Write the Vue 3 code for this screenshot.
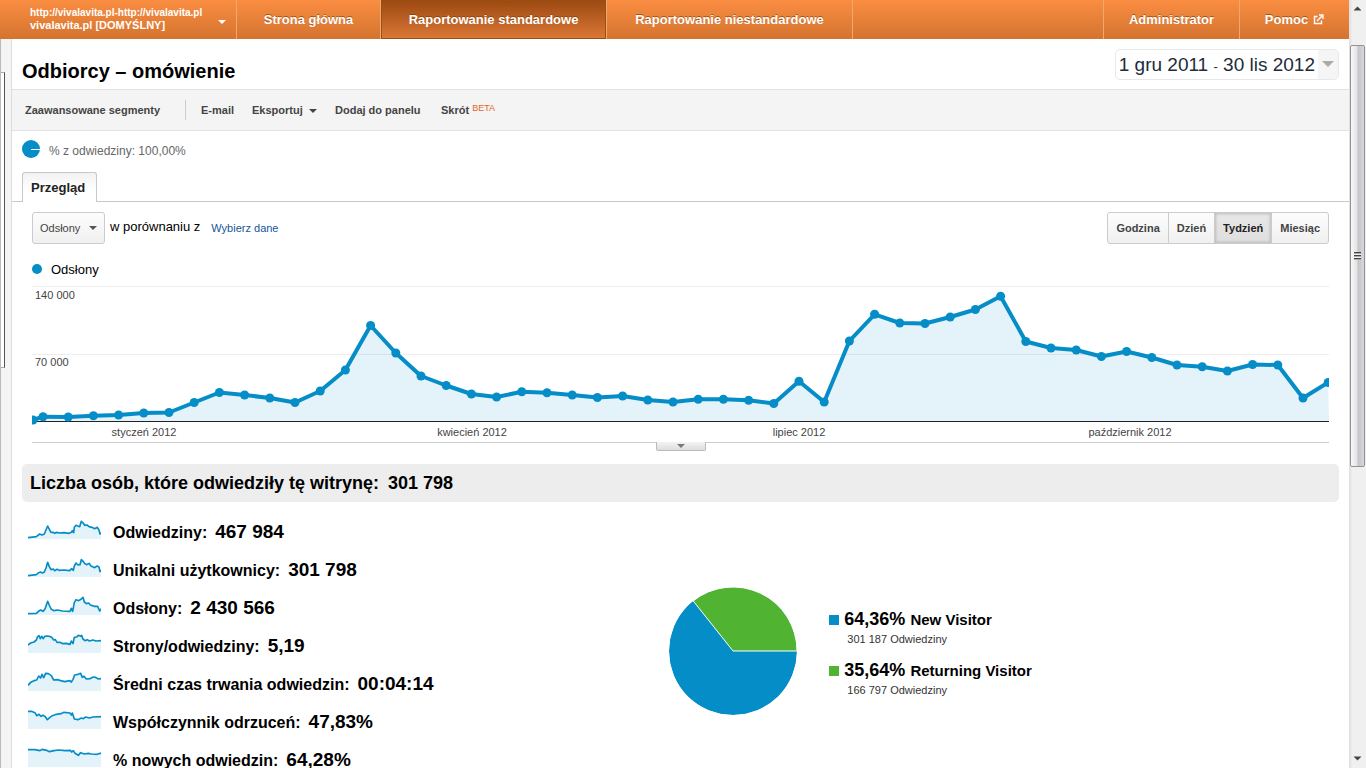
<script setup>
import { ref } from 'vue'

const metric = ref('Odsłony')
const period = ref('Tydzień')
const periods = ['Godzina', 'Dzień', 'Tydzień', 'Miesiąc']

const weekly = [
  136.7, 137, 135.7, 135, 133, 132.5, 122.5, 112.5, 115, 118, 122.5, 111, 90, 45.5, 73, 96, 105.5,
  114, 117, 111.7, 112.7, 115, 117.5, 116, 120, 122, 119.3, 119.3, 120.3, 123.5, 101.3, 122, 61,
  34.3, 43, 43.5, 37, 29.5, 16.3, 61.5, 68, 70, 76.5, 71.5, 77.5, 85, 86.8, 91, 84.5, 85, 118, 102.5
]
const points = [[1, 140], ...weekly.map((y, i) => [Math.round((11 + i * 25.2) * 10) / 10, y])]
const line = points.map((p) => p.join(',')).join(' ')
const area = `1,141 ${line} 1297,141`

const months = [
  { x: 112, label: 'styczeń 2012' },
  { x: 440, label: 'kwiecień 2012' },
  { x: 767, label: 'lipiec 2012' },
  { x: 1098, label: 'październik 2012' }
]

const stats = [
  {
    label: 'Odwiedziny:', value: '467 984',
    spark: '0,53 25,50 35,42 42,45 49,42 54,30 59,18 65,30 69,37 76,37 80,40 86,37 94,39 108,38 123,40 130,37 133,32 137,38 139,22 144,16 149,18 155,20 160,4 166,10 170,16 177,15 183,20 192,22 200,26 208,22 213,30 216,42 219,37'
  },
  {
    label: 'Unikalni użytkownicy:', value: '301 798',
    spark: '0,53 25,50 32,44 37,42 43,45 49,42 54,30 59,13 64,26 69,35 76,33 80,38 87,34 94,37 108,36 125,38 131,32 136,37 139,24 144,15 150,21 156,20 160,5 166,11 171,17 177,20 183,16 189,24 200,29 207,24 213,27 216,41 219,36'
  },
  {
    label: 'Odsłony:', value: '2 430 566',
    spark: '0,53 25,52 33,45 38,42 45,46 51,39 59,16 65,30 70,40 78,44 88,42 104,45 126,46 130,37 134,46 139,20 144,11 152,14 160,9 165,4 169,18 175,23 182,21 187,27 200,31 209,31 215,45 219,38'
  },
  {
    label: 'Strony/odwiedziny:', value: '5,19',
    spark: '0,33 8,27 18,24 25,18 29,8 33,5 37,14 41,7 46,14 50,7 57,6 64,7 71,10 77,18 82,17 87,25 96,25 104,29 115,28 126,31 130,21 135,29 139,10 146,9 151,4 158,7 161,4 165,15 171,20 178,17 184,21 195,18 204,21 219,20'
  },
  {
    label: 'Średni czas trwania odwiedzin:', value: '00:04:14',
    spark: '0,40 8,31 18,26 26,24 32,12 38,18 42,7 47,17 53,4 61,5 70,11 77,24 88,23 98,26 110,29 125,26 130,30 135,22 140,9 150,7 158,4 163,16 168,13 175,21 187,20 195,15 203,16 211,21 219,20'
  },
  {
    label: 'Współczynnik odrzuceń:', value: '47,83%',
    spark: '0,4 10,4 21,8 26,17 33,13 39,19 45,16 52,20 58,29 66,22 73,17 85,13 99,11 108,7 126,9 130,15 133,9 139,27 150,29 160,24 166,26 173,21 184,24 195,21 219,20'
  },
  {
    label: '% nowych odwiedzin:', value: '64,28%',
    spark: '0,5 20,5 36,8 42,4 56,7 64,11 78,8 91,6 112,8 127,7 131,12 136,8 141,16 151,22 158,14 169,18 181,16 190,18 207,19 219,15'
  }
]

const visitors = [
  { share: '64,36%', name: 'New Visitor', visits: '301 187 Odwiedziny', kind: 'fresh' },
  { share: '35,64%', name: 'Returning Visitor', visits: '166 797 Odwiedziny', kind: 'returning' }
]
</script>

<template>
  <div class="window">
    <div class="page">
      <header class="topbar">
        <button class="account" type="button">
          <span class="account-names">
            <small>http://vivalavita.pl-http://vivalavita.pl</small>
            <span>vivalavita.pl [DOMYŚLNY]</span>
          </span>
          <i class="caret"></i>
        </button>
        <nav class="nav">
          <a href="#" class="home">Strona główna</a>
          <a href="#" class="standard active">Raportowanie standardowe</a>
          <a href="#" class="custom">Raportowanie niestandardowe</a>
        </nav>
        <nav class="nav side">
          <a href="#" class="admin">Administrator</a>
          <a href="#" class="help">Pomoc
            <svg width="11" height="11" viewBox="0 0 11 11" aria-hidden="true">
              <path d="M4.5 2.5H1.5V9.5H8.5V6.5M4 7L9 2M6 1H10V5" fill="none" stroke="#fff" stroke-width="1.4" />
            </svg>
          </a>
        </nav>
      </header>

      <div class="body">
        <aside class="gutter"><button class="gutter-handle" type="button" aria-label="Menu"></button></aside>
        <main class="report">
          <div class="heading">
            <h1>Odbiorcy – omówienie</h1>
            <button class="dates" type="button">
              <span class="range">1 gru 2011 <small>-</small> 30 lis 2012</span>
              <span class="dates-arrow"><i class="caret"></i></span>
            </button>
          </div>

          <div class="toolbar">
            <button type="button" class="segments">Zaawansowane segmenty</button>
            <span class="divider"></span>
            <button type="button" class="email">E-mail</button>
            <button type="button" class="export">Eksportuj <i class="caret"></i></button>
            <button type="button" class="dashboard">Dodaj do panelu</button>
            <button type="button">Skrót <sup>BETA</sup></button>
          </div>

          <div class="share">
            <svg width="18" height="18" viewBox="0 0 18 18" aria-hidden="true">
              <circle cx="9" cy="9" r="9" fill="#058dc7" />
              <path d="M9 9.5H18" stroke="#fff" />
            </svg>
            <span>% z odwiedziny: 100,00%</span>
          </div>

          <div class="tabs"><button type="button">Przegląd</button></div>

          <div class="controls">
            <div class="picker">
              <select v-model="metric" aria-label="Dane"><option>Odsłony</option></select>
              <i class="caret"></i>
            </div>
            <span class="versus">w porównaniu z</span>
            <a href="#">Wybierz dane</a>
            <div class="periods">
              <button
                v-for="p in periods" :key="p" type="button"
                :class="{ on: p === period }" :aria-pressed="p === period" @click="period = p"
              >{{ p }}</button>
            </div>
          </div>

          <div class="legend"><i></i>Odsłony</div>

          <div class="chart">
            <svg viewBox="0 0 1297 162" role="img" aria-label="Odsłony">
              <path d="M0 6.5H1297M0 74.5H1297" stroke="#eee" />
              <polygon :points="area" fill="#058dc7" fill-opacity=".11" />
              <path d="M0 141.5H1297" stroke="#222" />
              <polyline :points="line" fill="none" stroke="#058dc7" stroke-width="4" stroke-linejoin="round" />
              <circle v-for="(p, i) in points" :key="i" :cx="p[0]" :cy="p[1]" r="4.5" fill="#058dc7" />
              <text x="3" y="19">140 000</text>
              <text x="3" y="86">70 000</text>
              <text v-for="m in months" :key="m.label" :x="m.x" y="156" text-anchor="middle">{{ m.label }}</text>
            </svg>
          </div>
          <button class="expander" type="button" aria-label="Rozwiń"><i class="caret"></i></button>

          <h2>Liczba osób, które odwiedziły tę witrynę: <span>301 798</span></h2>

          <div class="summary">
            <ul class="stats">
              <li v-for="s in stats" :key="s.label">
                <svg width="73" height="19" viewBox="0 0 219 57" aria-hidden="true">
                  <polygon :points="`0,57 ${s.spark} 219,57`" fill="#058dc7" fill-opacity=".11" />
                  <polyline :points="s.spark" fill="none" stroke="#058dc7" stroke-width="5" stroke-linejoin="round" />
                </svg>
                <span>{{ s.label }}</span><strong>{{ s.value }}</strong>
              </li>
            </ul>
            <div class="visitors">
              <svg width="132" height="132" viewBox="-66 -66 132 132" role="img" aria-label="New Visitor, Returning Visitor">
                <circle r="64" fill="#058dc7" />
                <path d="M0 0H64A64 64 0 0 0 -39.8 -50.1Z" fill="#50b432" stroke="#fff" stroke-linejoin="round" />
                <circle r="64.5" fill="none" stroke="#fff" />
              </svg>
              <dl>
                <div v-for="v in visitors" :key="v.name">
                  <dt><i :class="v.kind"></i><strong>{{ v.share }}</strong><span>{{ v.name }}</span></dt>
                  <dd>{{ v.visits }}</dd>
                </div>
              </dl>
            </div>
          </div>
        </main>
      </div>
    </div>

    <div class="scrollbar" aria-hidden="true">
      <svg width="9" height="5" viewBox="0 0 9 5"><path d="M0.5 4.5L4.5 0.5L8.5 4.5Z" fill="#444" /></svg>
      <div class="track">
        <div class="thumb"><span></span></div>
      </div>
      <svg width="9" height="5" viewBox="0 0 9 5"><path d="M0.5 0.5L4.5 4.5L8.5 0.5Z" fill="#444" /></svg>
    </div>
  </div>
</template>

<style>
body { margin: 0; background: #fff; }
</style>

<style scoped>
.window, .window * { box-sizing: border-box; }
.window {
  display: flex;
  height: 100vh;
  overflow: hidden;
  font-family: "Liberation Sans", Arial, sans-serif;
  font-size: 13px;
  color: #000;
}
button {
  font: inherit;
  color: inherit;
  background: none;
  border: 0;
  padding: 0;
  margin: 0;
  white-space: nowrap;
  cursor: pointer;
}
.caret {
  display: inline-block;
  border: 4px solid transparent;
  border-top-color: currentColor;
  border-bottom: 0;
}
.page { flex: 1; min-width: 0; display: flex; flex-direction: column; }

.topbar {
  display: flex;
  flex: none;
  height: 39px;
  background: linear-gradient(#fa8e42, #d4732f);
  color: #fff;
  font-weight: bold;
  text-shadow: 0 -1px 0 rgba(120, 55, 0, .65);
}
.account {
  display: flex;
  align-items: center;
  justify-content: space-between;
  width: 237px;
  padding: 0 10px 2px 30px;
  border-right: 1px solid #f0a870;
  text-align: left;
}
.account small, .account-names span { display: block; font-size: 11px; line-height: 13px; }
.account small { font-size: 10px; }
.account .caret { margin-top: 6px; }
.nav { display: flex; }
.nav a {
  display: flex;
  align-items: center;
  justify-content: center;
  gap: 5px;
  color: #fff;
  text-decoration: none;
  white-space: nowrap;
  border-right: 1px solid #f0a870;
}
.home { min-width: 144px; }
.standard { min-width: 226px; }
.custom { min-width: 246px; }
.nav a.active {
  background: linear-gradient(#9b4911, #dc7837);
  box-shadow: inset 0 0 0 1px #9a5012;
}
.nav.side { margin-left: auto; }
.nav.side a { border-right: 0; border-left: 1px solid #f0a870; }
.admin { min-width: 136px; }
.help { min-width: 110px; }

.body { flex: 1; min-height: 0; display: flex; }
.gutter {
  width: 12px;
  flex: none;
  background: #f4f4f4;
  border-left: 1px solid #bbb;
  border-right: 1px solid #ddd;
  padding-top: 33px;
}
.gutter-handle {
  display: block;
  width: 4px;
  height: 296px;
  background: #fff;
  border: 1px solid #aaa;
  border-left: 0;
  border-right: 1px solid #555;
}
.report { flex: 1; min-width: 0; display: flex; flex-direction: column; }
.report > * { flex: none; }

.heading {
  display: flex;
  align-items: center;
  justify-content: space-between;
  height: 51px;
  padding: 0 10px;
  border-bottom: 1px solid #e2e2e2;
}
h1 { margin: 13px 0 0; font-size: 20px; line-height: 24px; font-weight: bold; }
.dates {
  display: flex;
  height: 31px;
  border: 1px solid #e8e8e8;
  border-radius: 5px;
  overflow: hidden;
  color: #222b3a;
}
.range { padding: 0 3px; font-size: 19px; line-height: 29px; }
.range small { font-size: 13px; }
.dates-arrow { display: flex; align-items: center; padding: 0 4px; background: #f5f5f5; color: #aaa; }
.dates-arrow .caret { border-width: 6px 6px 0; }

.toolbar {
  display: flex;
  align-items: center;
  height: 41px;
  padding: 0 13px;
  background: #f4f4f4;
  border-bottom: 1px solid #e2e2e2;
  color: #444;
  font-size: 11px;
  font-weight: bold;
}
.toolbar button { text-align: left; }
.segments { min-width: 160px; }
.divider { width: 1px; height: 20px; margin-right: 15px; background: #ccc; }
.email { min-width: 51px; }
.export { min-width: 83px; }
.export .caret { margin-left: 3px; vertical-align: 1px; }
.dashboard { min-width: 106px; }
sup { font-size: 9px; line-height: 9px; font-weight: normal; color: #e0661c; vertical-align: 3px; }

.share {
  display: flex;
  align-items: center;
  gap: 9px;
  height: 41px;
  padding: 0 10px 6px;
  font-size: 12px;
  color: #666;
}
.share span { padding-top: 5px; }

.tabs { display: flex; padding-left: 10px; border-bottom: 1px solid #c8c8c8; }
.tabs button {
  height: 30px;
  margin-bottom: -1px;
  min-width: 75px;
  padding: 0 8px;
  border: 1px solid #c8c8c8;
  border-bottom: 0;
  border-radius: 3px 3px 0 0;
  background: linear-gradient(#f2f2f2, #fff 60%);
  text-align: left;
  font-weight: bold;
  color: #222;
}

.controls {
  display: flex;
  align-items: center;
  margin-top: 10px;
  padding: 0 20px;
}
.picker {
  display: grid;
  align-items: center;
  width: 73px;
  height: 32px;
  border: 1px solid #ccc;
  border-radius: 3px;
  background: linear-gradient(#fdfdfd, #f0f0f0);
  color: #555;
}
.picker select, .picker .caret { grid-area: 1 / 1; }
.picker .caret { justify-self: end; margin-right: 7px; pointer-events: none; }
.picker select {
  appearance: none;
  width: 100%;
  height: 30px;
  padding: 0 0 0 7px;
  border: 0;
  background: none;
  font: inherit;
  font-size: 11px;
  color: #444;
}
.versus { margin: 0 11px 3px 5px; }
.controls a { font-size: 11px; color: #15569b; text-decoration: none; }
.periods { display: flex; margin-left: auto; }
.periods button {
  height: 32px;
  padding: 0 8px;
  margin-left: -1px;
  border: 1px solid #ccc;
  background: linear-gradient(#fdfdfd, #f0f0f0);
  font-size: 11px;
  font-weight: bold;
  color: #444;
}
.periods button:first-child { border-radius: 3px 0 0 3px; }
.periods button:last-child { border-radius: 0 3px 3px 0; }
.periods button.on {
  background: linear-gradient(#e8e8e8, #dedede);
  box-shadow: inset 0 0 3px 1px #bbb;
  color: #222;
}

.legend {
  display: flex;
  align-items: center;
  gap: 9px;
  height: 36px;
  padding: 14px 20px 0;
}
.legend i { width: 10px; height: 10px; border-radius: 50%; background: #058dc7; }
.chart { margin: 0 20px; border-bottom: 1px solid #ccc; }
.chart svg { display: block; width: 100%; height: auto; }
.chart text { font-size: 11px; fill: #444; }
.expander {
  display: flex;
  align-items: center;
  justify-content: center;
  align-self: center;
  width: 50px;
  height: 9px;
  margin-top: -1px;
  border: 1px solid #bbb;
  border-top: 0;
  border-radius: 0 0 2px 2px;
  background: linear-gradient(#f4f4f4, #ddd);
  color: #777;
}

h2 {
  margin: 13px 10px 0;
  padding: 0 8px;
  border-radius: 5px;
  background: #ededed;
  font-size: 18px;
  line-height: 38px;
  font-weight: bold;
}
h2 span { margin-left: 4px; }
.summary { display: grid; grid-template-columns: 49fr 51fr; padding: 0 10px; margin-top: 11px; }
.stats { margin: 0; padding: 0; list-style: none; }
.stats li {
  display: flex;
  align-items: baseline;
  height: 38px;
  padding-left: 6px;
  font-size: 16px;
  line-height: 37px;
  font-weight: bold;
}
.stats svg { align-self: flex-start; margin: 7px 12px 0 0; }
.stats strong { margin-left: 8px; font-size: 19px; }

.visitors { display: flex; align-items: flex-start; padding-top: 72px; }
.visitors svg { flex: none; }
dl { margin: 22px 0 0 30px; }
dl > div { height: 51px; }
dt { display: flex; align-items: baseline; height: 26px; line-height: 25px; font-size: 15px; font-weight: bold; }
dt i { width: 10px; height: 10px; margin-right: 5px; }
dt strong { margin-right: 5px; font-size: 18px; }
dd { margin: 0 0 0 18px; font-size: 11px; line-height: 13px; color: #333; }
.fresh { background: #058dc7; }
.returning { background: #50b432; }

.scrollbar {
  display: flex;
  flex-direction: column;
  align-items: center;
  flex: none;
  width: 17px;
  padding: 6px 0 7px;
  background: linear-gradient(90deg, #dedede, #f0f0f0 20%);
}
.track { flex: 1; align-self: stretch; display: flex; padding: 34px 1px 0 1px; }
.thumb {
  display: flex;
  align-items: center;
  justify-content: center;
  flex: 1;
  height: 59.3%;
  border: 1px solid #929292;
  border-radius: 2px;
  background: linear-gradient(90deg, #f8f8f8, #e4e4e6 45%, #c4c4ca 55%, #d8d8dc);
}
.thumb span {
  width: 7px;
  height: 8px;
  background: repeating-linear-gradient(#444 0 1px, #aaa 1px 2px, #eee 2px 3px);
}
</style>
